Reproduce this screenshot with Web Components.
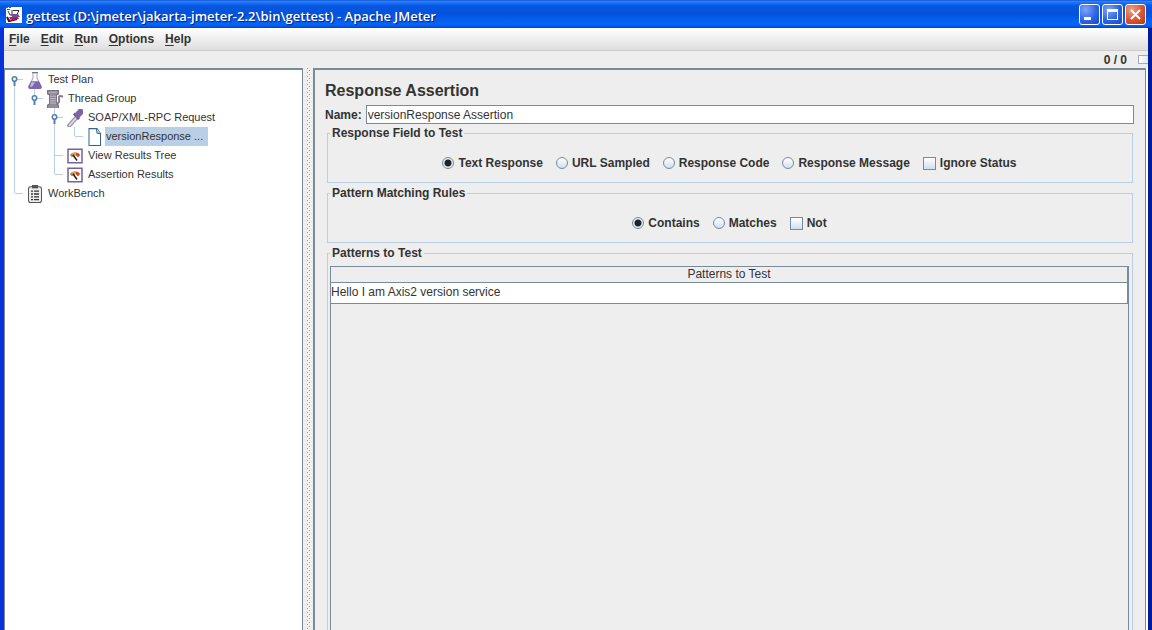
<!DOCTYPE html>
<html lang="en">
<head>
<meta charset="utf-8">
<title>gettest - Apache JMeter</title>
<style>
  body { margin: 0; font: 12px/16px "Liberation Sans", Arial, sans-serif; color: #333; background: #eee; overflow: hidden; }
</style>
</head>
<body>
<jmeter-window></jmeter-window>
<script>
const define = (name, html, setup) => {
  const template = document.createElement('template');
  template.innerHTML = html;
  customElements.define(name, class extends HTMLElement {
    constructor() {
      super();
      this.attachShadow({ mode: 'open' }).append(template.content.cloneNode(true));
    }
    connectedCallback() { if (setup) setup(this, this.shadowRoot); }
  });
};

define('title-bar', `
<style>
  :host { display: flex; align-items: center; gap: 4px; height: 28px; box-sizing: border-box; padding: 1px 6px 0;
    background: linear-gradient(#0a3fc0 0, #2f86ff 1px, #1670f5 3px, #0757e0 6px, #0453dd 14px, #0561f3 21px, #0564fb 25px, #0344c8 28px); }
  h1 { flex: 1; margin: 0; font: 600 13px/20px "Open Sans", "Noto Sans", sans-serif; color: #fff; text-shadow: 1px 1px 1px #0a1c80; white-space: nowrap; padding-top: 2px; }
  .buttons { display: flex; gap: 2px; }
  button { width: 21px; height: 21px; padding: 0; border: 1px solid #fff; border-radius: 3px; display: grid; place-items: center;
    background: radial-gradient(circle at 30% 25%, #7fa4f8, #2f63e6 55%, #1b48c6); }
  button.close { background: radial-gradient(circle at 30% 25%, #f0a085, #dc5330 55%, #b93a16); }
  svg { display: block; }
</style>
<svg width="16" height="16" viewBox="0 0 16 16" aria-hidden="true">
  <path fill="#fff" d="M0 0h16v16H0z"/>
  <path fill="#c02848" d="M0 0h2v1H0zM3 0h2v1H3zM1 2h3v1H1z"/>
  <path fill="none" stroke="#333" d="M2 4l2 4h3M6 3v4M7 3.500h6l-2 4"/>
  <path fill="#7a4a98" d="M5 7h7l2 3H6z"/><path fill="#b02850" d="M3 10h9l1 2H4z"/>
  <path fill="none" stroke="#3a1030" stroke-width="2" d="M1 10l2 4 8-2"/><path stroke="#c02848" d="M4 13.500l8-2"/>
</svg>
<h1><slot></slot></h1>
<div class="buttons">
  <button aria-label="Minimize"><svg width="19" height="19"><path fill="#fff" d="M4 12h7v3H4z"/></svg></button>
  <button aria-label="Maximize"><svg width="19" height="19"><path fill="#fff" fill-rule="evenodd" d="M4 4h11v11H4zM5 7v7h9V7z"/></svg></button>
  <button class="close" aria-label="Close"><svg width="19" height="19"><path stroke="#fff" stroke-width="2" d="M5 5l9 9M14 5l-9 9"/></svg></button>
</div>`);

define('menu-bar', `
<style>
  :host { display: flex; gap: 11px; height: 22px; padding: 0 5px; background: linear-gradient(#fff, #dedede); border-bottom: 1px solid #ccc; }
</style>
<slot></slot>`);

define('menu-entry', `
<style>
  :host { display: block; }
  button { border: 0; padding: 0; background: none; font: bold 12px/22px "Liberation Sans", Arial, sans-serif; color: #333; display: block; }
  u { text-underline-offset: 2px; }
</style>
<button><u></u><slot></slot></button>`, (host, root) => {
  root.querySelector('u').textContent = host.getAttribute('key');
});

define('status-strip', `
<style>
  :host { display: flex; justify-content: flex-end; align-items: center; gap: 11px; height: 17px; font-weight: bold; background: #eee; overflow: hidden; }
  i { width: 9px; height: 7px; border: 1px solid #9aabba; border-right: 0; background: linear-gradient(90deg, #fff, #dfe7ef); }
</style>
<output><slot></slot></output><i></i>`);

const icons = {
  flask: `<path fill="#fbfafd" stroke="#aaa4b8" d="M6 2v4L2.500 13h11L10 6V2"/><path fill="#7d68ad" d="M4 9h8l3 5q0 2-2 2H3q-2 0-2-2z"/><path fill="#c3b8dd" d="M4.500 10H8l-3 4H3z"/><path stroke="#666" d="M5 1.500h6"/>`,
  spool: `<path fill="#928b99" stroke="#7a7482" d="M.5.5h11v3l-2 1v8l2 1v3H.5v-3l2-1v-8l-2-1z"/><path stroke="#bfb9c6" d="M3 5.500h6M3 7.500h6M3 9.500h6M3 11.500h6M2 2h8"/><path fill="none" stroke="#847d8c" stroke-width="2" d="M9 12q4 0 3-4t4-2"/>`,
  pipette: `<path stroke="#9a93ae" stroke-width="4" d="M1 16L10 7"/><path stroke="#e4e0ee" stroke-width="1.500" d="M2 15l8-8"/><path stroke="#5f5282" stroke-width="2.500" d="M7 4l5 5"/><path stroke="#7a66a4" stroke-width="6" stroke-linecap="round" d="M11 5L13.500 2.500"/>`,
  page: `<path fill="#fff" stroke="#2f6590" d="M2 .5h8l3.500 4.500v10.500H2z"/><path fill="#d5e4f2" stroke="#2f6590" d="M9.500 .5l.5 4 3.500.5"/>`,
  gauge: `<path fill="#fff" stroke="#74629a" stroke-width="1.500" d="M1 2h14v12H1z"/><path fill="#e9a050" d="M3 7q5-5 10 0l-2 2q-3-3-6 0z"/><path fill="#d64335" d="M9 5q3 0 4 2l-2 2-2-2z"/><path fill="#71a06b" d="M3 7l2-1.500L6 8 5 9z"/><path stroke="#222" stroke-width="1.500" d="M6 7l4 5"/>`,
  clipboard: `<rect x="1.500" y="1.500" width="13" height="14" rx="2" fill="#eee" stroke="#555"/><path fill="#555" d="M5 0h6v3H5z"/><path stroke="#333" stroke-width="1.200" d="M4 5.500h2M7 5.500h5M4 8h2M7 8h5M4 10.500h2M7 10.500h5M4 13h2M7 13h5"/>`
};

define('tree-item', `
<style>
  :host { display: block; position: relative; }
  :host::before { content: ""; position: absolute; left: 8px; top: 0; bottom: 0; border-left: 1px solid #b8cfe5; }
  :host(:last-child)::before { bottom: auto; height: 9px; }
  :host(:first-child[root])::before { top: 9px; }
  .row { display: flex; align-items: center; height: 19px; }
  .gutter { width: 21px; height: 19px; position: relative; flex: none; }
  .gutter::before { content: ""; position: absolute; left: 9px; top: 9px; width: 8px; border-top: 1px solid #b8cfe5; }
  .knob { display: none; position: absolute; left: 4px; top: 5px; }
  :host([open]) .knob { display: block; }
  .icon { width: 16px; height: 18px; flex: none; margin-right: 2px; }
  .label { padding: 0 3px; font-size: 11px; line-height: 19px; white-space: nowrap; }
  :host([selected]) .label { background: #b8cfe5; padding: 0 5px 0 1px; }
  .children { padding-left: 20px; }
</style>
<div class="row">
  <span class="gutter"><svg class="knob" width="9" height="11"><circle cx="4.500" cy="4" r="2.200" fill="#fff" stroke="#5580aa" stroke-width="1.600"/><path stroke="#5580aa" stroke-width="2" d="M4.500 6v5"/></svg></span>
  <svg class="icon" viewBox="0 0 16 16" preserveAspectRatio="none" fill="none" aria-hidden="true"></svg>
  <span class="label"></span>
</div>
<div class="children" role="group"><slot></slot></div>`, (host, root) => {
  host.setAttribute('role', 'treeitem');
  root.querySelector('.icon').innerHTML = icons[host.getAttribute('icon')];
  root.querySelector('.label').textContent = host.getAttribute('label');
});

define('test-tree', `
<style>
  :host { display: block; box-sizing: border-box; background: #fff; border: 1px solid #7a8a99; border-top-width: 2px; border-bottom: 0; padding-left: 1px; }
</style>
<div role="tree"><slot></slot></div>`);

define('split-handle', `
<style>
  :host { display: block; width: 10px; background: #eee; }
  svg { display: block; width: 4px; height: 100%; margin-left: 4px; }
</style>
<svg aria-hidden="true"><defs><pattern id="dots" width="4" height="4" patternUnits="userSpaceOnUse"><path fill="#8e9ba8" d="M0 0h1v1H0zM2 2h1v1H2z"/><path fill="#fff" d="M1 1h1v1H1zM3 3h1v1H3z"/></pattern></defs><rect width="100%" height="100%" fill="url(#dots)"/></svg>`);

define('group-box', `
<style>
  :host { display: block; }
  fieldset { display: flex; flex-direction: column; box-sizing: border-box; height: 100%; min-width: 0; margin: 0; padding: 0 3px 0 2px; border: 1px solid #b8cfe5; }
  legend { padding: 0 2px; font-weight: bold; line-height: 14px; }
  :host([open-ended]) fieldset { border-bottom: 0; }
</style>
<fieldset><legend></legend><slot></slot></fieldset>`, (host, root) => {
  root.querySelector('legend').textContent = host.getAttribute('heading');
});

define('pattern-table', `
<style>
  :host { display: block; border: 1px solid #7a8a99; border-bottom: 0; background: #eee; }
  table { width: 100%; border-collapse: separate; border-spacing: 0; table-layout: fixed; }
  th, td { padding: 0; border: solid #7a8a99; border-width: 0 1px 1px 0; }
  th { font-weight: normal; line-height: 15px; }
  td { background: #fff; line-height: 18px; padding-bottom: 2px; }
</style>
<table><thead><tr><th>Patterns to Test</th></tr></thead><tbody><tr><td>Hello I am Axis2 version service</td></tr></tbody></table>`);

define('assertion-panel', `
<style>
  :host { display: flex; flex-direction: column; box-sizing: border-box; border: 2px solid #7a8a99; border-right-width: 1px; border-bottom: 0; padding: 10px 11px 0 10px; }
  h2 { margin: 0 0 3px; font-size: 16px; line-height: 22px; }
  .name { display: flex; align-items: center; gap: 4px; font-weight: bold; }
  .name input { flex: 1; min-width: 0; box-sizing: border-box; height: 19px; padding: 0 1px; border: 1px solid #7a8a99; font: 12px "Liberation Sans", Arial, sans-serif; color: #333; background: #fff; border-radius: 0; }
  .groups { flex: 1; display: flex; flex-direction: column; gap: 3px; padding: 2px 1px 0 2px; }
  .options { display: flex; justify-content: center; align-items: center; gap: 13px; box-sizing: border-box; height: 42px; padding-top: 4px; font-weight: bold; }
  label { display: flex; align-items: center; }
  .options label { gap: 4px; }
  .options input { appearance: none; margin: 0; box-sizing: border-box; border: 1px solid #7a8a99; background: linear-gradient(#fff, #cfdfee); }
  input[type=radio] { width: 12px; height: 12px; border-radius: 50%; }
  input[type=radio]:checked { background: radial-gradient(circle, #222 0 3px, #e4ecf4 4px); }
  input[type=checkbox] { width: 13px; height: 13px; }
  .patterns { flex: 1; }
  pattern-table { flex: 1; margin-top: 6px; }
</style>
<h2>Response Assertion</h2>
<div class="name"><label for="name">Name:</label><input id="name" type="text" value="versionResponse Assertion"></div>
<div class="groups">
  <group-box heading="Response Field to Test"><div class="options">
    <label><input type="radio" name="field" checked>Text Response</label>
    <label><input type="radio" name="field">URL Sampled</label>
    <label><input type="radio" name="field">Response Code</label>
    <label><input type="radio" name="field">Response Message</label>
    <label><input type="checkbox">Ignore Status</label>
  </div></group-box>
  <group-box heading="Pattern Matching Rules"><div class="options">
    <label><input type="radio" name="rule" checked>Contains</label>
    <label><input type="radio" name="rule">Matches</label>
    <label><input type="checkbox">Not</label>
  </div></group-box>
  <group-box class="patterns" heading="Patterns to Test" open-ended><pattern-table></pattern-table></group-box>
</div>`);

define('jmeter-window', `
<style>
  :host { display: flex; flex-direction: column; height: 100vh; }
  .frame { flex: 1; display: flex; flex-direction: column; min-height: 0; border: solid #0831d9; border-width: 0 4px; border-right-color: #001c9c; }
  main { flex: 1; min-height: 0; display: flex; padding-right: 2px; background: linear-gradient(#fff, #fff) right / 2px 100% no-repeat #eee; }
  test-tree { flex: 0 0 299px; }
  assertion-panel { flex: 1; min-width: 0; }
</style>
<title-bar>gettest (D:\\jmeter\\jakarta-jmeter-2.2\\bin\\gettest) - Apache JMeter</title-bar>
<div class="frame">
  <menu-bar>
    <menu-entry key="F">ile</menu-entry><menu-entry key="E">dit</menu-entry><menu-entry key="R">un</menu-entry><menu-entry key="O">ptions</menu-entry><menu-entry key="H">elp</menu-entry>
  </menu-bar>
  <status-strip>0 / 0</status-strip>
  <main>
    <test-tree>
      <tree-item root open icon="flask" label="Test Plan">
        <tree-item open icon="spool" label="Thread Group">
          <tree-item open icon="pipette" label="SOAP/XML-RPC Request">
            <tree-item selected icon="page" label="versionResponse ..."></tree-item>
          </tree-item>
          <tree-item icon="gauge" label="View Results Tree"></tree-item>
          <tree-item icon="gauge" label="Assertion Results"></tree-item>
        </tree-item>
      </tree-item>
      <tree-item root icon="clipboard" label="WorkBench"></tree-item>
    </test-tree>
    <split-handle></split-handle>
    <assertion-panel></assertion-panel>
  </main>
</div>`);
</script>
</body>
</html>
